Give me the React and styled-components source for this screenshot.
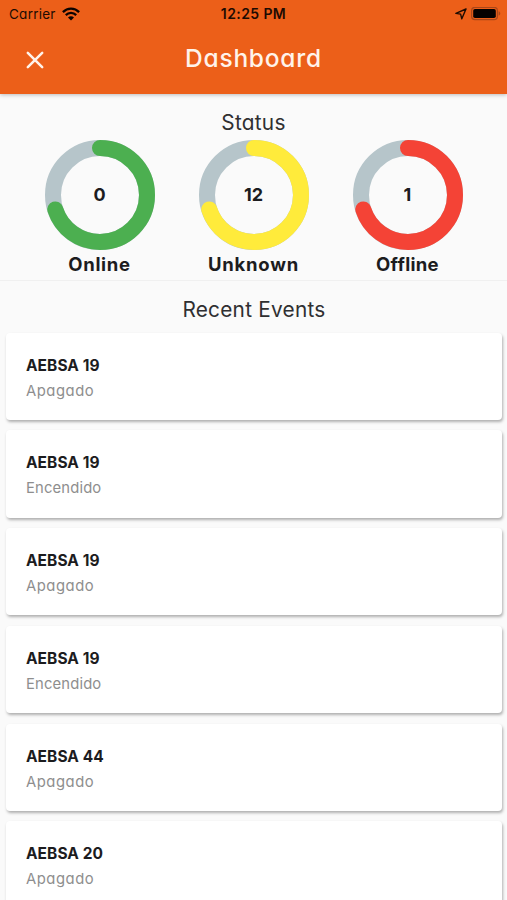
import styled, { createGlobalStyle } from 'styled-components'

const GlobalStyle = createGlobalStyle`
  * {
    box-sizing: border-box;
  }
  body {
    margin: 0;
    background: #fafafa;
    color: #1c1c1e;
    font-family: Inter, 'Open Sans', sans-serif;
    font-feature-settings: 'cv11';
  }
`

const Screen = styled.div`
  height: 900px;
  overflow: hidden;
  display: flex;
  flex-direction: column;
`

const Header = styled.header`
  flex: none;
  height: 94px;
  background: #ec5f19;
  box-shadow: 0 1px 4px rgba(0, 0, 0, 0.25);
`

const StatusBar = styled.div`
  height: 27px;
  padding: 0 6px 0 9px;
  display: grid;
  grid-template-columns: 1fr auto 1fr;
  align-items: center;
  color: #1d0b02;
  font-size: 13.5px;
`

const Carrier = styled.div`
  display: flex;
  align-items: center;
  gap: 6px;
  letter-spacing: 0.25px;
`

const Clock = styled.div`
  padding-right: 3px;
  font-size: 14px;
  font-weight: 600;
  letter-spacing: 0.4px;
`

const Indicators = styled.div`
  display: flex;
  align-items: center;
  justify-content: flex-end;
  gap: 4px;
`

const Toolbar = styled.div`
  height: 64px;
  padding: 0 26px;
  display: grid;
  grid-template-columns: 18px 1fr 18px;
  align-items: center;
`

const CloseButton = styled.button`
  display: flex;
  margin: 2px 0 0;
  padding: 0;
  border: 0;
  background: none;
  color: #fff3ea;
`

const Title = styled.h1`
  margin: 0;
  padding-bottom: 2px;
  text-align: center;
  color: #fff3ea;
  font-size: 24.5px;
  font-weight: 500;
  letter-spacing: 0.75px;
`

const StatusSection = styled.section`
  flex: none;
  height: 187px;
  padding-top: 14px;
  border-bottom: 1px solid #f0f0f0;
`

const Heading = styled.h2`
  margin: 0;
  height: 28px;
  line-height: 29px;
  text-align: center;
  color: #2f2f31;
  font-size: 20.8px;
  font-weight: 400;
  letter-spacing: 0.25px;
`

const Gauges = styled.div`
  display: grid;
  grid-template-columns: repeat(3, 154px);
  justify-content: center;
  margin-top: 4px;
`

const GaugeItem = styled.div`
  display: flex;
  flex-direction: column;
  align-items: center;
`

const Dial = styled.div`
  display: grid;
  place-items: center;
  width: 110px;
  height: 110px;

  > * {
    grid-area: 1 / 1;
  }
`

const Value = styled.span`
  padding-bottom: 2px;
  font-size: 18px;
  font-weight: 700;
`

const GaugeLabel = styled.div`
  height: 28px;
  line-height: 28px;
  font-size: 18.5px;
  font-weight: 700;
  letter-spacing: ${(props) => props.$spacing};
`

const Events = styled.section`
  flex: none;
  padding: 14px 5px 0 6px;
`

const EventList = styled.div`
  display: flex;
  flex-direction: column;
  gap: 10.4px;
  margin-top: 9.8px;
`

const Card = styled.article`
  height: 87.3px;
  padding: 21px 20px 0;
  border-radius: 4px;
  background: #fff;
  box-shadow: 1px 2px 3px rgba(0, 0, 0, 0.3);
`

const Device = styled.div`
  height: 24px;
  line-height: 24px;
  font-size: 15.5px;
  font-weight: 700;
  letter-spacing: 0.05px;
`

const EventState = styled.div`
  height: 26px;
  line-height: 26px;
  color: #8e8e8e;
  font-size: 14.8px;
  font-weight: 400;
  letter-spacing: ${(props) => props.$spacing};
`

const gauges = [
  { label: 'Online', value: 0, color: '#4caf50', spacing: '0.7px' },
  { label: 'Unknown', value: 12, color: '#ffeb3b', spacing: '0.75px' },
  { label: 'Offline', value: 1, color: '#f44336', spacing: '0.3px' },
]

const stateSpacing = {
  Apagado: '0.55px',
  Encendido: '0.15px',
}

const events = [
  { device: 'AEBSA 19', state: 'Apagado' },
  { device: 'AEBSA 19', state: 'Encendido' },
  { device: 'AEBSA 19', state: 'Apagado' },
  { device: 'AEBSA 19', state: 'Encendido' },
  { device: 'AEBSA 44', state: 'Apagado' },
  { device: 'AEBSA 20', state: 'Apagado' },
]

const WifiIcon = () => (
  <svg width="18" height="14" viewBox="0 0 18 14" fill="none" stroke="#0c0300" strokeWidth="2.3">
    <path d="M0.9 5.1C5.4 0.5 12.6 0.5 17.1 5.1" />
    <path d="M3.8 8.1C6.7 5.2 11.3 5.2 14.2 8.1" />
    <path d="M6 10.4C7.7 8.8 10.3 8.8 12 10.4L9 13.6Z" fill="#0c0300" stroke="none" />
  </svg>
)

const LocationIcon = () => (
  <svg width="12" height="12" viewBox="0 0 12 12" fill="none" stroke="#1d0b02" strokeWidth="1.4" strokeLinejoin="round">
    <path d="M11 1L0.9 5.4L5.6 6.1L6.8 10.8Z" />
  </svg>
)

const BatteryIcon = () => (
  <svg width="30" height="14" viewBox="0 0 30 14">
    <rect x="0.6" y="0.3" width="25.8" height="12.4" rx="3.4" fill="none" stroke="#a8471a" strokeWidth="1.2" />
    <rect x="2.2" y="1.9" width="22.6" height="9.2" rx="1.8" fill="#050100" />
    <path d="M27.6 4.3C29.8 5 29.8 8 27.6 8.7Z" fill="#a8471a" />
  </svg>
)

const CloseIcon = () => (
  <svg width="18" height="18" viewBox="0 0 18 18" stroke="currentColor" strokeWidth="2.5" strokeLinecap="round">
    <path d="M1.8 1.8L16.2 16.2M16.2 1.8L1.8 16.2" />
  </svg>
)

function Gauge({ label, value, color, spacing }) {
  return (
    <GaugeItem>
      <Dial>
        <svg width="110" height="110" viewBox="0 0 110 110" fill="none" strokeWidth="16">
          <circle cx="55" cy="55" r="47" stroke="#b6c5ca" />
          <circle
            cx="55"
            cy="55"
            r="47"
            stroke={color}
            strokeLinecap="round"
            pathLength="100"
            strokeDasharray="70 100"
            transform="rotate(-90 55 55)"
          />
        </svg>
        <Value>{value}</Value>
      </Dial>
      <GaugeLabel $spacing={spacing}>{label}</GaugeLabel>
    </GaugeItem>
  )
}

export default function App() {
  return (
    <Screen>
      <GlobalStyle />
      <Header>
        <StatusBar>
          <Carrier>
            Carrier
            <WifiIcon />
          </Carrier>
          <Clock>12:25 PM</Clock>
          <Indicators>
            <LocationIcon />
            <BatteryIcon />
          </Indicators>
        </StatusBar>
        <Toolbar>
          <CloseButton aria-label="Close">
            <CloseIcon />
          </CloseButton>
          <Title>Dashboard</Title>
        </Toolbar>
      </Header>
      <StatusSection>
        <Heading>Status</Heading>
        <Gauges>
          {gauges.map((gauge) => (
            <Gauge key={gauge.label} {...gauge} />
          ))}
        </Gauges>
      </StatusSection>
      <Events>
        <Heading>Recent Events</Heading>
        <EventList>
          {events.map((event, i) => (
            <Card key={i}>
              <Device>{event.device}</Device>
              <EventState $spacing={stateSpacing[event.state]}>{event.state}</EventState>
            </Card>
          ))}
        </EventList>
      </Events>
    </Screen>
  )
}
